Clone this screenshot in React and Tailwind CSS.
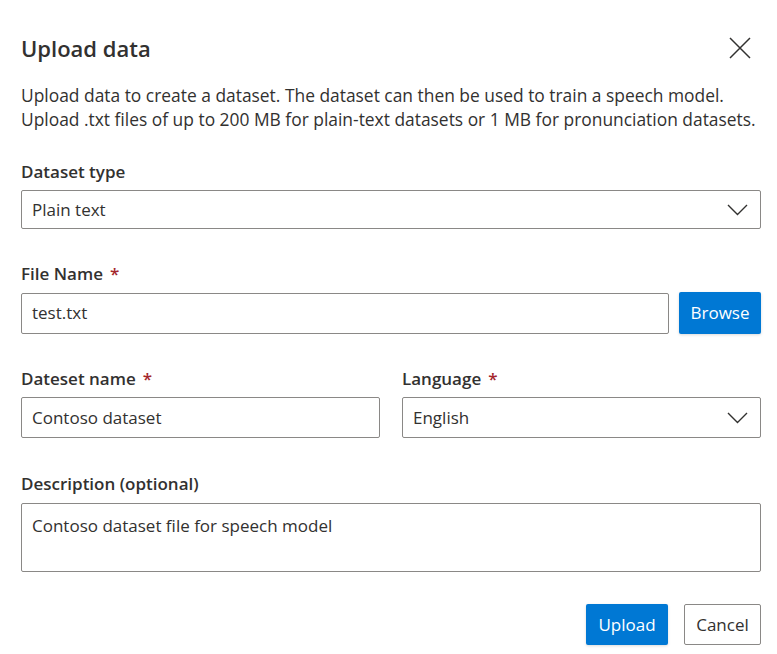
const FONT = "font-['Segoe_UI','Open_Sans',sans-serif]"

function Chevron() {
  return (
    <svg width="21" height="12" viewBox="0 0 21 12" fill="none" className="text-[#323130]">
      <polyline points="1,1 10.5,10.5 20,1" stroke="currentColor" strokeWidth="1.4" />
    </svg>
  )
}

function Label({ children, required }) {
  return (
    <div className="text-[17px] leading-6 font-semibold text-[#323130]">
      {children}
      {required && <span className="ml-[7px] text-[#a4262c]">*</span>}
    </div>
  )
}

function Field({ value, className = '' }) {
  return (
    <div className={`flex items-center px-[10px] border border-[#8a8886] rounded-[2px] bg-white text-[17px] text-[#323130] ${className}`}>
      {value}
    </div>
  )
}

function Select({ value, className = '' }) {
  return (
    <div className={`flex items-center justify-between pl-[10px] pr-[12px] border border-[#8a8886] rounded-[2px] bg-white text-[17px] text-[#323130] ${className}`}>
      <span>{value}</span>
      <Chevron />
    </div>
  )
}

export default function App() {
  return (
    <div className={`w-[777px] h-[654px] bg-white ${FONT}`}>
      <div className="pl-[21px] pr-[16px] pt-[34px]">
        {/* Header */}
        <div className="flex items-center justify-between h-7">
          <h2 className="text-[22px] leading-7 font-semibold text-[#323130]">Upload data</h2>
          <button className="mr-[10px] text-[#323130]">
            <svg width="22" height="22" viewBox="0 0 22 22" fill="none">
              <path d="M1 1 L21 21 M21 1 L1 21" stroke="currentColor" strokeWidth="1.5" />
            </svg>
          </button>
        </div>

        <p className="mt-[21px] text-[17.4px] leading-6 text-[#323130] whitespace-nowrap">
          Upload data to create a dataset. The dataset can then be used to train a speech model.
          <br />
          Upload .txt files of up to 200 MB for plain-text datasets or 1 MB for pronunciation datasets.
        </p>

        <div className="w-[740px]">
          <div className="mt-[29px]">
            <Label>Dataset type</Label>
            <Select value="Plain text" className="mt-[6px] h-[39px]" />
          </div>

          <div className="mt-[33px]">
            <Label required>File Name</Label>
            <div className="mt-[6px] flex items-center gap-[10px]">
              <Field value="test.txt" className="flex-1 h-[41px]" />
              <button className="w-[82px] h-[42px] rounded-[2px] bg-[#0078d4] text-white text-[17px] shadow-[0_1px_3px_rgba(0,0,0,0.15)]">
                Browse
              </button>
            </div>
          </div>

          <div className="mt-[33px] grid grid-cols-2 gap-x-[22px]">
            <div>
              <Label required>Dateset name</Label>
              <Field value="Contoso dataset" className="mt-[6px] h-[41px]" />
            </div>
            <div>
              <Label required>Language</Label>
              <Select value="English" className="mt-[6px] h-[41px]" />
            </div>
          </div>

          <div className="mt-[34px]">
            <Label>Description (optional)</Label>
            <div className="mt-[7px] h-[69px] px-[10px] pt-[10px] border border-[#8a8886] rounded-[2px] text-[17px] leading-6 text-[#323130]">
              Contoso dataset file for speech model
            </div>
          </div>

          <div className="mt-[32px] flex justify-end gap-[16px]">
            <button className="w-[82px] h-[41px] rounded-[2px] bg-[#0078d4] text-white text-[17px] shadow-[0_1px_3px_rgba(0,0,0,0.15)]">
              Upload
            </button>
            <button className="w-[77px] h-[41px] rounded-[2px] border border-[#8a8886] bg-white text-[#323130] text-[17px]">
              Cancel
            </button>
          </div>
        </div>
      </div>
    </div>
  )
}
